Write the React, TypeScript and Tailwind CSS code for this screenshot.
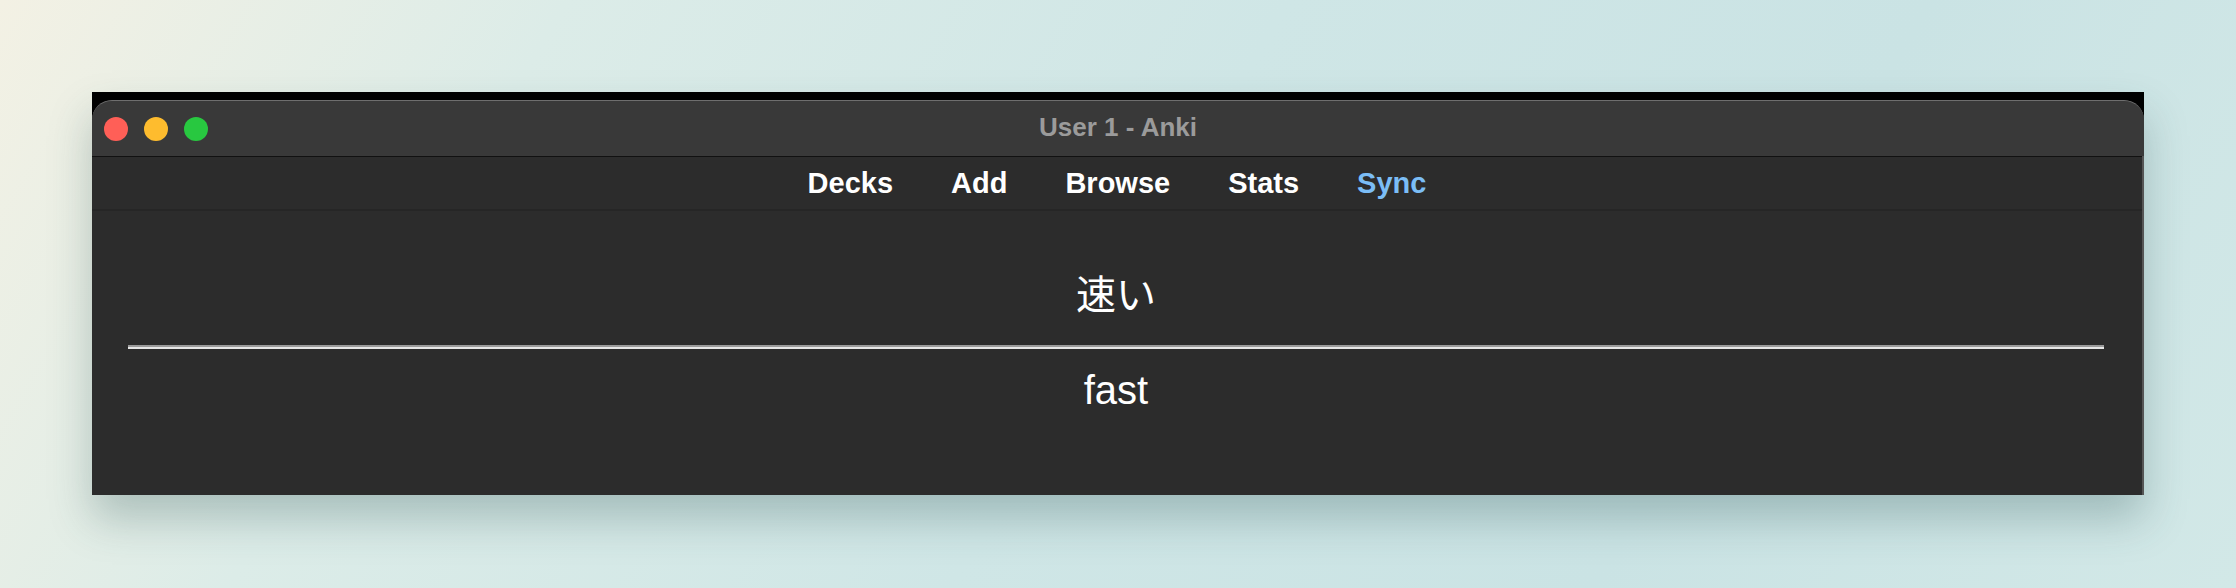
const navItems = ["Decks", "Add", "Browse", "Stats", "Sync"];

const TrafficLights = () => (
  <div className="flex items-center gap-[16px] pl-[12px]">
    <span className="block size-[24px] rounded-full bg-[#ff5f57]" />
    <span className="block size-[24px] rounded-full bg-[#febc2e]" />
    <span className="block size-[24px] rounded-full bg-[#28c840]" />
  </div>
);

const App = () => {
  return (
    <div className="h-[588px] w-full overflow-hidden bg-[linear-gradient(120deg,#f3f1e4_0%,#dcece8_22%,#cfe6e6_50%,#cae3e4_75%,#d2e8e7_100%)] px-[92px] pt-[92px] font-['Liberation_Sans',sans-serif]">
      <div className="w-[2052px] bg-black pt-[8px] shadow-[0_24px_40px_rgba(40,80,80,0.28)]">
        {/* title bar */}
        <div className="grid h-[56px] grid-cols-[1fr_auto_1fr] items-center rounded-t-[20px] border-t border-[#6e6e6e] bg-[#393939]">
          <TrafficLights />
          <div className="mb-[4px] text-[26px] font-bold leading-none text-[#9b9b9b]">User 1 - Anki</div>
          <div />
        </div>
        <div className="border-r-2 border-[#555555] bg-[#2c2c2c]">
          {/* toolbar */}
          <div className="flex h-[55px] items-center justify-center gap-[58px] border-t border-b-2 border-t-[#111111] border-b-[#262626] text-[29px] font-bold leading-none text-white">
            {navItems.map((item) => (
              <span key={item} className={item === "Sync" ? "text-[#7bbdf6]" : ""}>
                {item}
              </span>
            ))}
          </div>
          {/* card */}
          <div className="h-[284px] pl-[36px] pr-[38px] pt-[60px] text-center text-[40px] text-white">
            <div className="font-['Liberation_Sans','Noto_Sans_CJK_JP',sans-serif] leading-[48px]">速い</div>
            <div className="mt-[26px] h-[4px] border-t-2 border-b-2 border-t-[#9a9a9a] border-b-[#e6e6e6]" />
            <div className="mt-[18px] leading-[46px]">fast</div>
          </div>
        </div>
      </div>
    </div>
  );
};

export default App;
